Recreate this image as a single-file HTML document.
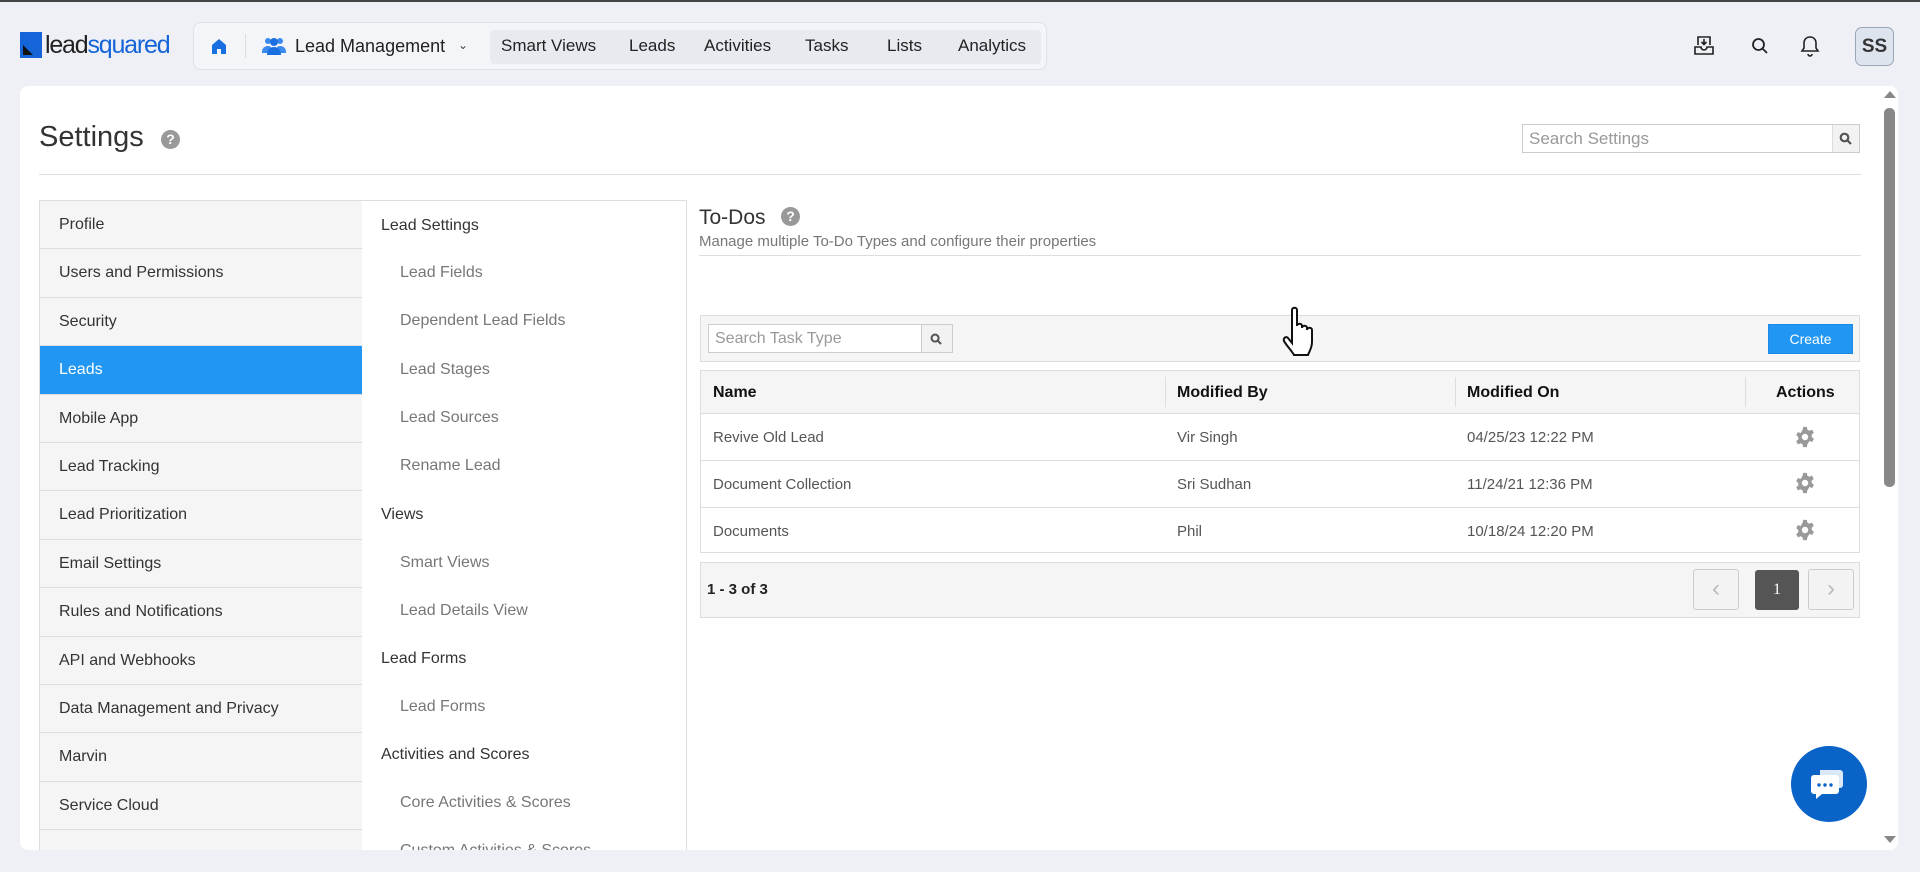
<!DOCTYPE html>
<html><head><meta charset="utf-8"><style>
*{box-sizing:border-box;margin:0;padding:0}
body{width:1920px;height:872px;overflow:hidden;background:#eef0f5;font-family:"Liberation Sans",sans-serif;position:relative;color:#333}
.a{position:absolute}
.nav{left:193px;top:22px;width:854px;height:48px;border:1px solid #dde1ea;border-radius:8px;background:#f4f5f9}
.navg{left:490px;top:30px;width:551px;height:34px;background:#e8eaf0;border-radius:4px}
.nt{top:36px;font-size:17px;color:#222}
.card{left:20px;top:86px;width:1878px;height:764px;background:#fff;border-radius:8px}
.lm{left:39px;top:200px;width:324px;height:650px;background:#f5f5f5;border:1px solid #ddd;border-bottom:none;overflow:hidden}
.li{position:absolute;left:0;width:322px;height:48.4px;border-bottom:1px solid #ddd;font-size:16px;color:#333;padding-left:19px;line-height:48px}
.li.on{background:#2196f3;color:#fff}
.c2{left:362px;top:200px;width:325px;height:650px;border:1px solid #ddd;border-bottom:none;border-left:none;background:#fff;overflow:hidden}
.h2{position:absolute;left:19px;font-size:16px;color:#333}
.s2{position:absolute;left:38px;font-size:16px;color:#777}
.th{font-size:16px;font-weight:bold;color:#111;top:384px}
.td{font-size:15px;color:#555}
.gear{width:22px;height:22px}
</style></head><body>
<div class="a" style="left:0;top:0;width:1920px;height:2px;background:#444"></div>
<!-- logo -->
<div class="a" style="left:20px;top:32px;width:22px;height:26px;background:#1565d8"></div>
<div class="a" style="left:23px;top:45px;width:0;height:0;border-left:10px solid #111;border-top:10px solid transparent"></div>
<div class="a" style="left:45px;top:31px;font-size:25px;letter-spacing:-1.2px;color:#222">lead<span style="color:#1565d8">squared</span></div>
<div class="a nav"></div>
<svg class="a" style="left:210px;top:37px" width="18" height="18" viewBox="0 0 18 18"><path d="M2 8L9 2l7 6v9h-5v-5H7v5H2z" fill="#1a6fe0"/></svg>
<div class="a" style="left:245px;top:34px;width:1px;height:24px;background:#ddd"></div>
<svg class="a" style="left:262px;top:36px" width="24" height="20" viewBox="0 0 24 20"><circle cx="6" cy="5" r="3" fill="#3b8af0"/><circle cx="18" cy="5" r="3" fill="#3b8af0"/><circle cx="12" cy="6" r="4" fill="#1a6fe0"/><path d="M0 16c0-5 4-6 6-6s3 1 3 1v6H0zM24 16c0-5-4-6-6-6s-3 1-3 1v6h9z" fill="#3b8af0"/><path d="M5 19c0-6 4-8 7-8s7 2 7 8z" fill="#1a6fe0"/></svg>
<div class="a nt" style="left:295px;font-size:18px">Lead Management</div>
<div class="a" style="left:458px;top:38px;font-size:12px;color:#444">&#8964;</div>
<div class="a navg"></div>
<div class="a nt" style="left:501px">Smart Views</div>
<div class="a nt" style="left:629px">Leads</div>
<div class="a nt" style="left:704px">Activities</div>
<div class="a nt" style="left:805px">Tasks</div>
<div class="a nt" style="left:887px">Lists</div>
<div class="a nt" style="left:958px">Analytics</div>
<!-- right icons -->
<svg class="a" style="left:1693px;top:34px" width="22" height="22" viewBox="0 0 22 22" fill="none" stroke="#222" stroke-width="1.6"><path d="M5 11V3h12v8M2 13h6a3 3 0 006 0h6v7H2z"/><path d="M11 5v5M8.5 8l2.5 2.5L13.5 8"/></svg>
<svg class="a" style="left:1751px;top:37px" width="18" height="18" viewBox="0 0 18 18" fill="none" stroke="#222" stroke-width="1.8"><circle cx="7.5" cy="7.5" r="5.5"/><path d="M11.5 11.5L16 16"/></svg>
<svg class="a" style="left:1800px;top:35px" width="20" height="22" viewBox="0 0 20 22" fill="none" stroke="#222" stroke-width="1.6"><path d="M10 2c-4 0-6 3-6 6v5l-2 3h16l-2-3V8c0-3-2-6-6-6zM8 19a2 2 0 004 0"/></svg>
<div class="a" style="left:1855px;top:27px;width:39px;height:39px;border:1px solid #9aa6b8;border-radius:7px;background:#dde4ee;color:#333;font-size:19px;font-weight:bold;text-align:center;line-height:37px">SS</div>
<div class="a card"></div>
<!-- scrollbar -->
<div class="a" style="left:1884px;top:91px;width:0;height:0;border-left:6px solid transparent;border-right:6px solid transparent;border-bottom:7px solid #888"></div>
<div class="a" style="left:1884px;top:108px;width:11px;height:379px;background:#888;border-radius:5px"></div>
<div class="a" style="left:1884px;top:836px;width:0;height:0;border-left:6px solid transparent;border-right:6px solid transparent;border-top:7px solid #888"></div>
<div class="a" style="left:39px;top:121px;font-size:29px;color:#333">Settings</div>
<div class="a" style="left:161px;top:130px;width:19px;height:19px;border-radius:50%;background:#999;color:#fff;font-size:14px;font-weight:bold;text-align:center;line-height:19px">?</div>
<div class="a" style="left:1522px;top:124px;width:338px;height:29px;border:1px solid #ccc;font-size:17px;color:#999;padding:4px 6px">Search Settings</div>
<div class="a" style="left:1832px;top:125px;width:27px;height:27px;background:#f2f2f2;border-left:1px solid #ddd"></div>
<svg class="a" style="left:1839px;top:132px" width="13" height="13" viewBox="0 0 13 13" fill="none" stroke="#555" stroke-width="2.2"><circle cx="5.5" cy="5.5" r="3.8"/><path d="M8.5 8.5L12 12"/></svg>
<div class="a" style="left:39px;top:174px;width:1822px;height:1px;background:#ddd"></div>
<!-- left menu -->
<div class="a lm">
<div class="li" style="top:0">Profile</div>
<div class="li" style="top:48.4px">Users and Permissions</div>
<div class="li" style="top:96.8px">Security</div>
<div class="li on" style="top:145.2px">Leads</div>
<div class="li" style="top:193.6px">Mobile App</div>
<div class="li" style="top:242px">Lead Tracking</div>
<div class="li" style="top:290.4px">Lead Prioritization</div>
<div class="li" style="top:338.8px">Email Settings</div>
<div class="li" style="top:387.2px">Rules and Notifications</div>
<div class="li" style="top:435.6px">API and Webhooks</div>
<div class="li" style="top:484px">Data Management and Privacy</div>
<div class="li" style="top:532.4px">Marvin</div>
<div class="li" style="top:580.8px">Service Cloud</div>
</div>
<div class="a c2">
<div class="h2" style="top:16px">Lead Settings</div>
<div class="s2" style="top:63px">Lead Fields</div>
<div class="s2" style="top:111px">Dependent Lead Fields</div>
<div class="s2" style="top:160px">Lead Stages</div>
<div class="s2" style="top:208px">Lead Sources</div>
<div class="s2" style="top:256px">Rename Lead</div>
<div class="h2" style="top:305px">Views</div>
<div class="s2" style="top:353px">Smart Views</div>
<div class="s2" style="top:401px">Lead Details View</div>
<div class="h2" style="top:449px">Lead Forms</div>
<div class="s2" style="top:497px">Lead Forms</div>
<div class="h2" style="top:545px">Activities and Scores</div>
<div class="s2" style="top:593px">Core Activities &amp; Scores</div>
<div class="s2" style="top:641px">Custom Activities &amp; Scores</div>
</div>
<!-- content -->
<div class="a" style="left:699px;top:206px;font-size:21px;color:#333">To-Dos</div>
<div class="a" style="left:781px;top:207px;width:19px;height:19px;border-radius:50%;background:#999;color:#fff;font-size:14px;font-weight:bold;text-align:center;line-height:19px">?</div>
<div class="a" style="left:699px;top:233px;font-size:15px;color:#777">Manage multiple To-Do Types and configure their properties</div>
<div class="a" style="left:699px;top:255px;width:1162px;height:1px;background:#ddd"></div>
<div class="a" style="left:700px;top:315px;width:1160px;height:47px;background:#f5f5f5;border:1px solid #ddd"></div>
<div class="a" style="left:708px;top:324px;width:245px;height:29px;border:1px solid #ccc;background:#fff;font-size:16px;color:#999;padding:5px 6px">Search Task Type</div>
<div class="a" style="left:921px;top:325px;width:31px;height:27px;background:#f2f2f2;border-left:1px solid #ccc"></div>
<svg class="a" style="left:930px;top:333px" width="12" height="12" viewBox="0 0 13 13" fill="none" stroke="#555" stroke-width="2.2"><circle cx="5.5" cy="5.5" r="3.8"/><path d="M8.5 8.5L12 12"/></svg>
<div class="a" style="left:1768px;top:324px;width:85px;height:30px;background:#2196f3;border:1px solid #1e88e5;color:#fff;font-size:14px;text-align:center;line-height:28px">Create</div>
<!-- table -->
<div class="a" style="left:700px;top:370px;width:1160px;height:183px;border:1px solid #ddd"></div>
<div class="a" style="left:701px;top:371px;width:1158px;height:43px;background:#f5f5f5;border-bottom:1px solid #ddd"></div>
<div class="a" style="left:1165px;top:377px;width:1px;height:30px;background:#ddd"></div>
<div class="a" style="left:1455px;top:377px;width:1px;height:30px;background:#ddd"></div>
<div class="a" style="left:1745px;top:377px;width:1px;height:30px;background:#ddd"></div>
<div class="a th" style="left:713px">Name</div>
<div class="a th" style="left:1177px">Modified By</div>
<div class="a th" style="left:1467px">Modified On</div>
<div class="a th" style="left:1776px">Actions</div>
<div class="a" style="left:701px;top:460px;width:1158px;height:1px;background:#ddd"></div>
<div class="a" style="left:701px;top:507px;width:1158px;height:1px;background:#ddd"></div>
<div class="a td" style="left:713px;top:429px">Revive Old Lead</div>
<div class="a td" style="left:1177px;top:429px">Vir Singh</div>
<div class="a td" style="left:1467px;top:429px">04/25/23 12:22 PM</div>
<div class="a td" style="left:713px;top:476px">Document Collection</div>
<div class="a td" style="left:1177px;top:476px">Sri Sudhan</div>
<div class="a td" style="left:1467px;top:476px">11/24/21 12:36 PM</div>
<div class="a td" style="left:713px;top:523px">Documents</div>
<div class="a td" style="left:1177px;top:523px">Phil</div>
<div class="a td" style="left:1467px;top:523px">10/18/24 12:20 PM</div>
<svg width="0" height="0" style="position:absolute"><defs><symbol id="g" viewBox="0 0 24 24"><path fill="#999" d="M10 1h4l.6 3 2.2 1.2 2.8-1.2 2 3.4-2.3 2 .1 2.6 2.3 2-2 3.4-2.8-1.2L14.6 20l-.6 3h-4l-.6-3-2.2-1.2-2.8 1.2-2-3.4 2.3-2V12l-2.3-2 2-3.4 2.8 1.2L9.4 4zM12 8.5a3.5 3.5 0 100 7 3.5 3.5 0 000-7z"/></symbol></defs></svg>
<svg class="a gear" style="left:1794px;top:426px"><use href="#g"/></svg>
<svg class="a gear" style="left:1794px;top:472px"><use href="#g"/></svg>
<svg class="a gear" style="left:1794px;top:519px"><use href="#g"/></svg>
<!-- pagination -->
<div class="a" style="left:700px;top:562px;width:1160px;height:56px;background:#f5f5f5;border:1px solid #ddd"></div>
<div class="a" style="left:707px;top:581px;font-size:15px;font-weight:bold;color:#222">1 - 3 of 3</div>
<div class="a" style="left:1693px;top:569px;width:46px;height:41px;border:1px solid #ccc;border-radius:3px;background:#f3f3f3;color:#bbb;font-size:24px;text-align:center;line-height:38px">&#8249;</div>
<div class="a" style="left:1755px;top:570px;width:44px;height:40px;border-radius:3px;background:#555;color:#fff;font-size:16px;text-align:center;line-height:40px;font-family:'Liberation Serif',serif">1</div>
<div class="a" style="left:1808px;top:569px;width:46px;height:41px;border:1px solid #ccc;border-radius:3px;background:#f3f3f3;color:#bbb;font-size:24px;text-align:center;line-height:38px">&#8250;</div>
<!-- cursor -->
<svg class="a" style="left:1280px;top:306px" width="40" height="52" viewBox="0 0 40 52"><path d="M12 4c0-3 5-3 5 0v16c0-3 5-3 5 0v2c0-3 5-3 5 0v2c0-3 5-3 5 0v12c0 6-3 10-4 13H14c-2-4-8-10-10-14-1-3 2-5 4-3l4 5z" fill="#fff" stroke="#111" stroke-width="2"/></svg>
<!-- chat -->
<div class="a" style="left:1791px;top:746px;width:76px;height:76px;border-radius:50%;background:#0a64c8"></div>
<svg class="a" style="left:1810px;top:766px" width="38" height="36" viewBox="0 0 38 36"><path d="M10 4h20a3 3 0 013 3v12a3 3 0 01-3 3H10z" fill="#fff" opacity=".85"/><path d="M4 9h22a3 3 0 013 3v13a3 3 0 01-3 3H12l-6 5v-5H4a3 3 0 01-3-3V12a3 3 0 013-3z" fill="#fff"/><circle cx="9" cy="19" r="1.7" fill="#0a64c8"/><circle cx="15" cy="19" r="1.7" fill="#0a64c8"/><circle cx="21" cy="19" r="1.7" fill="#0a64c8"/></svg>
</body></html>
